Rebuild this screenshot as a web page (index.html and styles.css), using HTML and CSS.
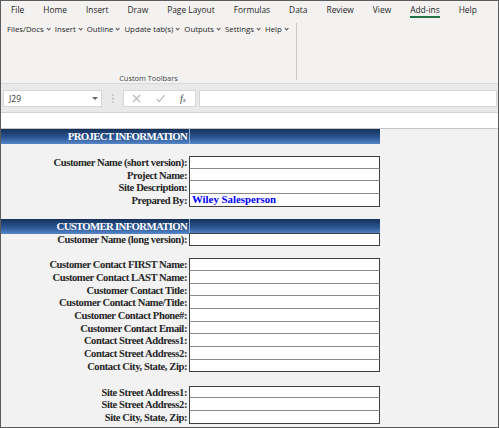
FILE: index.html
```html
<!DOCTYPE html>
<html>
<head>
<meta charset="utf-8">
<link rel="stylesheet" href="styles.css">
</head>
<body>
<div class="frame">
  <div class="ribbon">
    <div class="tabs">
      <span class="tab">File</span>
      <span class="tab">Home</span>
      <span class="tab">Insert</span>
      <span class="tab">Draw</span>
      <span class="tab">Page Layout</span>
      <span class="tab">Formulas</span>
      <span class="tab">Data</span>
      <span class="tab">Review</span>
      <span class="tab">View</span>
      <span class="tab active">Add-ins</span>
      <span class="tab">Help</span>
    </div>
    <div class="groups">
      <div class="group">
        <div class="menus">
          <span class="menu">Files/Docs</span>
          <span class="menu">Insert</span>
          <span class="menu">Outline</span>
          <span class="menu">Update tab(s)</span>
          <span class="menu">Outputs</span>
          <span class="menu">Settings</span>
          <span class="menu">Help</span>
        </div>
        <div class="group-label">Custom Toolbars</div>
      </div>
      <div class="group-sep"></div>
    </div>
  </div>

  <div class="fbar">
    <div class="namebox">
      <span class="cellref">J29</span>
      <svg class="nb-arrow" width="6" height="3" viewBox="0 0 6 3"><path d="M0 0 H6 L3 3 Z" fill="#666"/></svg>
    </div>
    <div class="grip">
      <svg width="2" height="9" viewBox="0 0 2 9"><circle cx="1" cy="1" r="0.7" fill="#999"/><circle cx="1" cy="4.5" r="0.7" fill="#999"/><circle cx="1" cy="8" r="0.7" fill="#999"/></svg>
    </div>
    <div class="fbtns">
      <svg class="fbtn" width="9" height="9" viewBox="0 0 9 9"><path d="M1 1 L8 8 M8 1 L1 8" stroke="#b5b5b5" stroke-width="1.1" fill="none"/></svg>
      <svg class="fbtn" width="9" height="9" viewBox="0 0 9 9"><path d="M0.8 5 L3.3 7.6 L8.4 1.2" stroke="#b5b5b5" stroke-width="1.1" fill="none"/></svg>
      <span class="fx"><i>f</i><i class="fx-x">x</i></span>
    </div>
    <div class="finput"></div>
  </div>

  <div class="sheet">
    <div class="topstrip"></div>

    <div class="hdr hdr-first">
      <div class="hdr-l">PROJECT INFORMATION</div>
      <div class="hdr-r"></div>
    </div>

    <div class="block b1">
      <div class="lbl">Customer Name (short version):</div><div class="val"></div>
      <div class="lbl">Project Name:</div><div class="val"></div>
      <div class="lbl">Site Description:</div><div class="val"></div>
      <div class="lbl">Prepared By:</div><div class="val"><span class="entry">Wiley Salesperson</span></div>
    </div>

    <div class="hdr hdr-second">
      <div class="hdr-l">CUSTOMER INFORMATION</div>
      <div class="hdr-r"></div>
    </div>

    <div class="block b2">
      <div class="lbl">Customer Name (long version):</div><div class="val"></div>
    </div>

    <div class="block b3">
      <div class="lbl">Customer Contact FIRST Name:</div><div class="val"></div>
      <div class="lbl">Customer Contact LAST Name:</div><div class="val"></div>
      <div class="lbl">Customer Contact Title:</div><div class="val"></div>
      <div class="lbl">Customer Contact Name/Title:</div><div class="val"></div>
      <div class="lbl">Customer Contact Phone#:</div><div class="val"></div>
      <div class="lbl">Customer Contact Email:</div><div class="val"></div>
      <div class="lbl">Contact Street Address1:</div><div class="val"></div>
      <div class="lbl">Contact Street Address2:</div><div class="val"></div>
      <div class="lbl">Contact City, State, Zip:</div><div class="val"></div>
    </div>

    <div class="block b4">
      <div class="lbl">Site Street Address1:</div><div class="val"></div>
      <div class="lbl">Site Street Address2:</div><div class="val"></div>
      <div class="lbl">Site City, State, Zip:</div><div class="val"></div>
    </div>
  </div>
</div>
</body>
</html>
```

FILE: styles.css
```css
html, body {
  margin: 0;
  padding: 0;
}
body {
  width: 499px;
  height: 428px;
  overflow: hidden;
  font-family: "Open Sans", "Noto Sans", sans-serif;
  background: #f2f2f2;
}
.frame {
  box-sizing: border-box;
  width: 499px;
  height: 428px;
  border: 1px solid #5c5c5c;
  display: flex;
  flex-direction: column;
  background: #f2f2f2;
  overflow: hidden;
}

/* ---------- Ribbon ---------- */
.ribbon {
  height: 82px;
  background: #f3f2f1;
  flex: none;
}
.tabs {
  display: flex;
  gap: 19px;
  padding-left: 10px;
  height: 17px;
  align-items: center;
  font-size: 8.4px;
  color: #262626;
}
.tab {
  line-height: 12px;
  position: relative;
  white-space: nowrap;
}
.tab.active {
  color: #1a1a1a;
}
.tab.active::after {
  content: "";
  position: absolute;
  left: 0;
  right: 0;
  bottom: -2px;
  height: 2px;
  background: #217346;
}
.groups {
  display: flex;
  height: 65px;
}
.group {
  width: 295px;
  display: flex;
  flex-direction: column;
}
.menus {
  display: flex;
  gap: 4.7px;
  padding: 5px 0 0 6px;
  font-size: 7.8px;
  line-height: 12px;
  color: #262626;
  white-space: nowrap;
}
.menu::after {
  content: "";
  display: inline-block;
  width: 2.3px;
  height: 2.3px;
  border-right: 1px solid #555;
  border-bottom: 1px solid #555;
  transform: rotate(45deg);
  margin-left: 3px;
  vertical-align: 2px;
}
.group-label {
  margin-top: auto;
  text-align: center;
  font-size: 7.4px;
  line-height: 10px;
  color: #444;
  height: 10px;
}
.group-sep {
  width: 1px;
  background: #c8c8c8;
  margin-top: 5px;
  height: 57px;
}

/* ---------- Formula bar ---------- */
.fbar {
  flex: none;
  box-sizing: border-box;
  height: 30px;
  background: #e9e9e9;
  border-top: 1px solid #d9d9d9;
  border-bottom: 1px solid #d2d2d2;
  display: flex;
  align-items: flex-start;
  padding-top: 6px;
}
.namebox {
  box-sizing: border-box;
  width: 99px;
  height: 17px;
  margin-left: 2px;
  background: #fff;
  border: 1px solid #d6d6d6;
  display: flex;
  align-items: center;
  justify-content: space-between;
  padding: 0 3px 0 5px;
}
.cellref {
  font-size: 8.5px;
  color: #333;
}
.grip {
  width: 21px;
  height: 17px;
  display: flex;
  align-items: center;
  justify-content: center;
}
.fbtns {
  box-sizing: border-box;
  width: 73px;
  height: 17px;
  background: #fff;
  border: 1px solid #d6d6d6;
  display: flex;
  align-items: center;
  gap: 15px;
  padding-left: 8px;
}
.fbtn {
  flex: none;
}
.fx {
  font-family: "Liberation Serif", serif;
  font-size: 10px;
  color: #444;
  white-space: nowrap;
}
.fx-x {
  font-size: 7px;
}
.finput {
  box-sizing: border-box;
  margin-left: 3px;
  width: 298px;
  height: 17px;
  background: #fff;
  border: 1px solid #d6d6d6;
}

/* ---------- Sheet ---------- */
.sheet {
  flex: 1;
  background: #f2f2f2;
}
.topstrip {
  height: 15px;
  background: #fff;
}
.hdr {
  display: grid;
  grid-template-columns: 188px 191px;
  height: 14px;
}
.hdr-first {
  border-top: 1px solid #c6c6c6;
}
.hdr-second {
  margin-top: 12.3px;
}
.hdr-l, .hdr-r {
  background: linear-gradient(to bottom, #15325a 0%, #2b5491 55%, #5787c8 100%);
}
.hdr-l {
  box-sizing: border-box;
  text-align: right;
  padding-right: 2px;
  color: #fff;
  font-family: "Liberation Serif", serif;
  font-weight: bold;
  font-size: 10.8px;
  letter-spacing: -0.7px;
  line-height: 15px;
  white-space: nowrap;
}
.hdr-r {
  border-left: 1px solid #8eaedb;
}
.block {
  display: grid;
  grid-template-columns: 188px 191px;
  grid-auto-rows: 12.67px;
}
.b1 { margin-top: 13px; }
.b3 { margin-top: 12.8px; }
.b4 { margin-top: 13.5px; }
.lbl {
  box-sizing: border-box;
  text-align: right;
  padding-right: 2px;
  font-family: "Liberation Serif", serif;
  font-weight: bold;
  font-size: 10.6px;
  letter-spacing: -0.42px;
  line-height: 13.5px;
  color: #262626;
  white-space: nowrap;
}
.val {
  box-sizing: border-box;
  background: #fff;
  border-left: 1px solid #3f3f3f;
  border-right: 1px solid #3f3f3f;
  border-bottom: 1px solid #8a8a8a;
  overflow: hidden;
}
.block .val:nth-child(2) {
  border-top: 1px solid #3f3f3f;
}
.block .val:last-child {
  border-bottom: 1px solid #3f3f3f;
}
.entry {
  display: block;
  padding-left: 2px;
  font-family: "Liberation Serif", serif;
  font-weight: bold;
  font-size: 10.8px;
  line-height: 11px;
  color: #0000ff;
  white-space: nowrap;
}
```
